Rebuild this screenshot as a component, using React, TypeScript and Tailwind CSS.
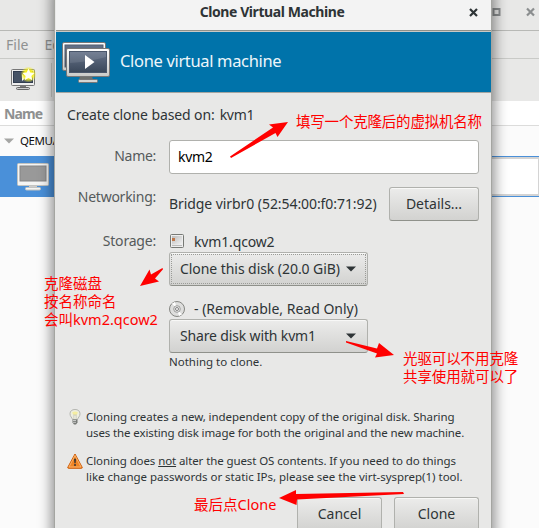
import type { ReactNode } from 'react';

const UI = "font-['Noto_Sans','Open_Sans',sans-serif]";
const CJK = "font-['Noto_Sans','Noto_Sans_CJK_SC',sans-serif]";

function Button({ className = '', children }: { className?: string; children: ReactNode }) {
  return (
    <button
      className={`box-border flex h-[34px] items-center rounded-[3px] border border-[#b0b1ad] border-b-[#8f918b] bg-linear-to-b from-[#ececeb] to-[#d2d2d0] text-[14px] leading-[20px] text-[#2e3436] shadow-[inset_0_1px_0_#f8f8f7] ${className}`}
    >
      {children}
    </button>
  );
}

function Caret() {
  return (
    <svg width="10" height="6" viewBox="0 0 10 6" className="shrink-0">
      <path d="M0 .5h10L5 5.5z" fill="#2e3436" />
    </svg>
  );
}

function MachinesIcon() {
  return (
    <svg width="48" height="42" viewBox="0 0 48 42">
      <defs>
        <linearGradient id="frame" x1="0" y1="0" x2="0" y2="1">
          <stop offset="0" stopColor="#fff" />
          <stop offset="1" stopColor="#c9cac7" />
        </linearGradient>
        <linearGradient id="screen" x1="0" y1="0" x2="0" y2="1">
          <stop offset="0" stopColor="#66738a" />
          <stop offset="1" stopColor="#3a4759" />
        </linearGradient>
      </defs>
      <rect x=".5" y=".5" width="43" height="28" rx="1.5" fill="url(#frame)" stroke="#777" />
      <rect x="3" y="3" width="38" height="22" fill="url(#screen)" stroke="#555f70" />
      <path d="M18 34h12l1 4H17z" fill="#6e706d" />
      <rect x="16.500" y="37.500" width="19" height="3" rx="1" fill="#d5d5d3" stroke="#777" />
      <rect x="4.500" y="6.500" width="43" height="28" rx="1.500" fill="url(#frame)" stroke="#777" />
      <rect x="7.500" y="9.500" width="37" height="21" fill="url(#screen)" stroke="#4a566a" />
      <path d="M8 10h36v5q-18 5-36 6z" fill="#fff" opacity=".1" />
      <path d="M23 13l9.500 7L23 27z" fill="#fff" />
    </svg>
  );
}

function NewMachineIcon() {
  return (
    <svg width="26" height="24" viewBox="0 0 26 24">
      <defs>
        <radialGradient id="glow">
          <stop offset=".55" stopColor="#f4ee20" />
          <stop offset="1" stopColor="#f4ee20" stopOpacity="0" />
        </radialGradient>
      </defs>
      <rect x=".5" y="2.500" width="23" height="16" rx="1" fill="#eee" stroke="#777" />
      <rect x="2.500" y="4.500" width="19" height="11" fill="#465366" stroke="#313d50" />
      <path d="M11 7l4 3.500-4 3.500z" fill="#fff" />
      <path d="M9 19h6v2H9z" fill="#777" />
      <rect x="5.500" y="20.500" width="13" height="2" rx="1" fill="#ccc" stroke="#666" />
      <circle cx="17.500" cy="7.500" r="8" fill="url(#glow)" />
      <path d="M17.500 1.500l1.800 4 4.200.5-3.100 2.900.9 4.300-3.800-2.200-3.800 2.200.9-4.300L11.500 6l4.200-.5z" fill="#fffff0" />
    </svg>
  );
}

function IdleMachineIcon() {
  return (
    <svg width="32" height="28" viewBox="0 0 32 28">
      <rect x=".5" y=".5" width="31" height="22" rx="1" fill="#f5f5f4" stroke="#c3c4c1" />
      <rect x="3" y="3" width="26" height="15" fill="#999" stroke="#858585" />
      <path d="M12 23h8v2h-8z" fill="#ccc" />
      <rect x="8.500" y="24.500" width="15" height="2.500" rx="1" fill="#f5f5f4" stroke="#c3c4c1" />
    </svg>
  );
}

function DiskIcon() {
  return (
    <svg width="16" height="16" viewBox="0 0 16 16">
      <defs>
        <linearGradient id="disk" x1="0" y1="0" x2="1" y2="1">
          <stop offset="0" stopColor="#bbb" />
          <stop offset="1" stopColor="#f2f2f2" />
        </linearGradient>
      </defs>
      <rect x="1.500" y=".5" width="13" height="13" rx="1" fill="#eee" stroke="#777975" />
      <rect x="3" y="2" width="10" height="8.500" fill="url(#disk)" />
      <path d="M3 11.500h10" stroke="#bbb" />
      <rect x="3" y="4" width="3" height="3" fill="#bf7648" />
    </svg>
  );
}

function DiscIcon() {
  return (
    <svg width="16" height="16" viewBox="0 0 16 16">
      <circle cx="8" cy="8" r="7.500" fill="#dededd" stroke="#858682" />
      <path d="M8 8L3 2.500 6 1zM8 8l5 5.500-3 1.500z" fill="#fff" />
      <circle cx="8" cy="8" r="3.300" fill="#e8e8e8" stroke="#8c8d8a" strokeWidth=".8" />
      <circle cx="8" cy="8" r="1.500" fill="#fff" stroke="#666" strokeWidth=".8" />
    </svg>
  );
}

function BulbIcon() {
  return (
    <svg width="16" height="16" viewBox="0 0 16 16">
      <path d="M5.500 10.500C5 8.500 3 7.500 3 4.800 3 2 5 .5 8 .5s5 1.500 5 4.300c0 2.700-2 3.700-2.500 5.700z" fill="#eeeedf" stroke="#b4b5b0" />
      <path d="M5 3.500q3-2 6 0L9.500 6h-3z" fill="#f5eea0" />
      <path d="M6.800 10V5.500L8 6.500l1.200-1V10" fill="none" stroke="#c4c4b8" strokeWidth=".7" />
      <path d="M5.500 10.500h5v3L9 15.500H7l-1.500-2z" fill="#777a77" />
      <path d="M6 11.500h3M6 13.300h3" stroke="#ddd" strokeWidth=".8" />
    </svg>
  );
}

function WarningIcon() {
  return (
    <svg width="16" height="16" viewBox="0 0 16 16">
      <path d="M8 1L15.300 14.500q0 .8-.8.8H1.500q-.8 0-.8-.8z" fill="#f08424" stroke="#cc5d0c" strokeLinejoin="round" />
      <path d="M8 2.500L14 14H2z" fill="none" stroke="#fbbd79" strokeWidth=".8" />
      <path d="M7 5.800h2l-.4 4.400H7.400z" fill="#333" />
      <circle cx="8" cy="12" r="1" fill="#333" />
    </svg>
  );
}

function MainWindow() {
  return (
    <div className="flex h-[528px] w-[539px] flex-col bg-[#fbfbfb]">
      <div className="flex h-[31px] items-center justify-end border-b border-[#b8b9b6] bg-[#e8e8e7] pr-[4px]">
        <svg width="43" height="10" viewBox="0 0 43 10" className="mt-[-7px] block">
          <path d="M1.500 2h6v6h-6z" fill="none" stroke="#8b8e8f" strokeWidth="2" />
          <path d="M35 1.500l7 7m0-7l-7 7" stroke="#8b8e8f" strokeWidth="2.200" />
        </svg>
      </div>
      <div className="flex h-[28px] items-center gap-[16px] border-b border-[#c9cac7] bg-[#e8e8e7] pl-[6px] text-[14px] text-[#8f9191]">
        <span>File</span>
        <span>Edit</span>
      </div>
      <div className="flex h-[42px] items-start bg-[#e8e8e7] pl-[11px] pt-[8px]">
        <NewMachineIcon />
        <div className="ml-[14px] mt-[-4px] h-[34px] w-px bg-[#c9cac7]" />
      </div>
      <div className="h-[25px] border-b border-[#dcdcdb] bg-white pl-[4px] text-[14px] font-bold leading-[25px] tracking-[-0.9px] text-[#8f9191]">
        Name
      </div>
      <div className="flex h-[30px] items-center bg-[#fbfbfb] pl-[4px] text-[11.5px] text-[#111]">
        <svg width="10" height="6" viewBox="0 0 10 6">
          <path d="M0 .5h10L5 5.500z" fill="#a5a6a4" />
        </svg>
        <span className="ml-[6px] tracking-[-0.4px]">QEMU/KVM</span>
      </div>
      <div className="flex h-[41px] bg-[#4a90d9]">
        <div className="w-[200px] pl-[17px] pt-[7px]">
          <IdleMachineIcon />
        </div>
        <div className="ml-auto mt-px h-[39px] w-[200px] border-2 border-l-0 border-r border-[#d4d4d4] bg-white" />
      </div>
    </div>
  );
}

function Dialog() {
  return (
    <div className="absolute left-[54px] top-[-10px] box-border flex h-[560px] w-[438px] flex-col border-x border-[#a4a5a1] bg-[#e8e8e7] pl-px pt-[10px] text-[14px] leading-[20px] text-[#2e3436] shadow-[0_3px_12px_3px_rgba(0,0,0,0.42)]">
      <div className="relative flex h-[31px] shrink-0 justify-center border-b border-[#8f918b] bg-[#f3f3f3] pt-[2px] font-bold">
        <span className="ml-[-3px] tracking-[-0.42px]">Clone Virtual Machine</span>
        <svg width="9" height="9" viewBox="0 0 9 9" className="absolute right-[13px] top-[8px]">
          <path d="M1 1l7 7m0-7L1 8" stroke="#2e3436" strokeWidth="2.200" />
        </svg>
      </div>
      <div className="flex h-[62px] shrink-0 items-start border-b border-t border-b-[#a4a5a1] border-t-[#c8c9c5] bg-[#0073aa] pl-[6px] pt-[10px] text-white">
        <MachinesIcon />
        <span className="ml-[10px] mt-[7px] text-[16.500px] leading-[24px] tracking-[-0.34px] text-[#eef6fa]">
          Clone virtual machine
        </span>
      </div>
      <div className="flex h-[47px] shrink-0 gap-[5px] pl-[11px] pt-[12px]">
        <span className="tracking-[-0.1px]">Create clone based on:</span>
        <span className="tracking-[-0.3px]">kvm1</span>
      </div>
      <div className="flex h-[47px] shrink-0">
        <span className="w-[100px] pt-[6px] text-right tracking-[-0.3px] text-[#555a5b]">Name:</span>
        <div className="ml-[13px] h-[34px] w-[310px] rounded-[3px] border border-[#b0b1ad] bg-white pl-[8px] leading-[32px] tracking-[-0.3px] text-black">
          kvm2
        </div>
      </div>
      <div className="flex h-[44px] shrink-0">
        <span className="w-[100px] text-right tracking-[-0.25px] text-[#555a5b]">Networking:</span>
        <span className="ml-[13px] w-[220px] whitespace-nowrap pt-[7px] tracking-[-0.07px]">
          Bridge virbr0 (52:54:00:f0:71:92)
        </span>
        <Button className="w-[90px] justify-center">Details...</Button>
      </div>
      <div className="flex h-[178px] shrink-0">
        <span className="w-[100px] text-right tracking-[-0.2px] text-[#555a5b]">Storage:</span>
        <div className="ml-[13px] flex flex-col">
          <div className="flex h-[21px] items-center gap-[9px]">
            <DiskIcon />
            <span className="tracking-[-0.15px]">kvm1.qcow2</span>
          </div>
          <Button className="w-[199px] p-px">
            <span className="flex h-full w-full items-center justify-between border border-dotted border-[#9a9b97] pl-[8px] pr-[9px]">
              <span className="tracking-[-0.06px]">Clone this disk (20.0 GiB)</span>
              <Caret />
            </span>
          </Button>
          <div className="mt-[12px] flex h-[21px] items-center gap-[9px]">
            <DiscIcon />
            <span>- (Removable, Read Only)</span>
          </div>
          <Button className="w-[199px] justify-between pl-[10px] pr-[11px]">
            <span className="tracking-[-0.15px]">Share disk with kvm1</span>
            <Caret />
          </Button>
          <span className="text-[11.500px] leading-[18px]">Nothing to clone.</span>
        </div>
      </div>
      <div className="flex h-[44px] shrink-0 gap-[3px] pl-[11px] text-[11.500px] leading-[16px]">
        <BulbIcon />
        <p className="whitespace-nowrap">
          <span className="tracking-[-0.06px]">
            Cloning creates a new, independent copy of the original disk. Sharing
          </span>
          <br />
          <span className="tracking-[-0.11px]">
            uses the existing disk image for both the original and the new machine.
          </span>
        </p>
      </div>
      <div className="flex h-[44px] shrink-0 gap-[3px] pl-[11px] text-[11.500px] leading-[16px]">
        <WarningIcon />
        <p className="whitespace-nowrap">
          <span className="tracking-[-0.1px]">
            Cloning does <span className="underline">not</span> alter the guest OS contents. If you need to do things
          </span>
          <br />
          <span className="tracking-[-0.02px]">
            like change passwords or static IPs, please see the virt-sysprep(1) tool.
          </span>
        </p>
      </div>
      <div className="flex justify-end gap-[12px] pr-[12px]">
        <Button className="w-[85px] justify-center">Cancel</Button>
        <Button className="w-[85px] justify-center">Clone</Button>
      </div>
    </div>
  );
}

function Annotations() {
  return (
    <div className={`${CJK} text-[14.500px] leading-[18px] text-[#f00]`}>
      <svg width="539" height="528" viewBox="0 0 539 528" className="absolute left-0 top-0" fill="#f00">
        <path d="M230 156.500L273 127.500l-4-3 19-2.500-10.500 15-2-4L231 158z" />
        <path d="M140 286l9.500-16.500 1.500 5 11.500-6.500.5 1.200-8 9.300 4 3z" />
        <path d="M346 341l31 7.500 2-5.500 15 12-19 2.500 2-4-31-11z" />
        <path d="M279 498l17-8v4l107-2 1 2-107 5.500-.5 5.500z" />
      </svg>
      <span className="absolute left-[296px] top-[112px] whitespace-nowrap tracking-[-0.2px]">
        填写一个克隆后的虚拟机名称
      </span>
      <p className="absolute left-[44px] top-[274px] whitespace-nowrap">
        克隆磁盘
        <br />
        按名称命名
        <br />
        会叫kvm2.qcow2
      </p>
      <p className="absolute left-[403px] top-[349px] whitespace-nowrap tracking-[-0.1px]">
        光驱可以不用克隆
        <br />
        共享使用就可以了
      </p>
      <span className="absolute left-[194px] top-[495px] whitespace-nowrap">最后点Clone</span>
    </div>
  );
}

export default function App() {
  return (
    <div className={`relative h-[528px] w-[539px] overflow-hidden ${UI}`}>
      <MainWindow />
      <Dialog />
      <Annotations />
    </div>
  );
}
